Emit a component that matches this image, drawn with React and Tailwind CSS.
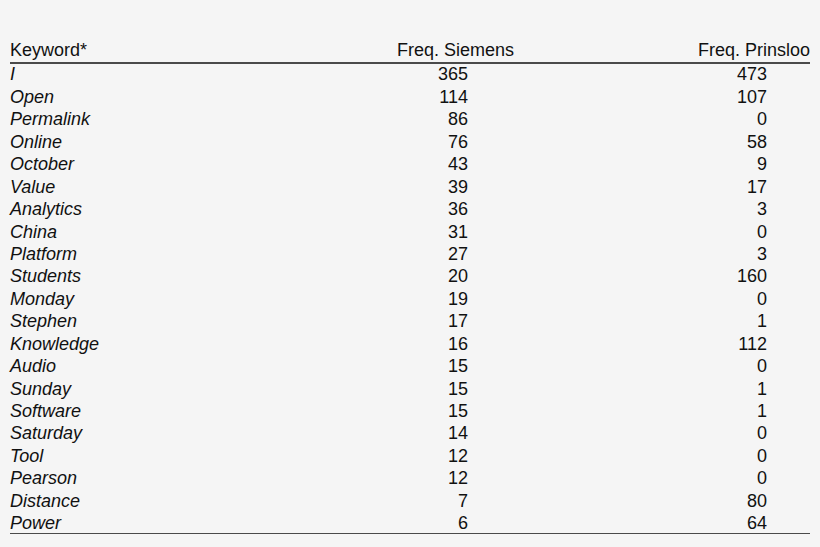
import React from "react";

const rows = [
  ["I", 365, 473],
  ["Open", 114, 107],
  ["Permalink", 86, 0],
  ["Online", 76, 58],
  ["October", 43, 9],
  ["Value", 39, 17],
  ["Analytics", 36, 3],
  ["China", 31, 0],
  ["Platform", 27, 3],
  ["Students", 20, 160],
  ["Monday", 19, 0],
  ["Stephen", 17, 1],
  ["Knowledge", 16, 112],
  ["Audio", 15, 0],
  ["Sunday", 15, 1],
  ["Software", 15, 1],
  ["Saturday", 14, 0],
  ["Tool", 12, 0],
  ["Pearson", 12, 0],
  ["Distance", 7, 80],
  ["Power", 6, 64],
];

export default function App() {
  return (
    <div
      className="w-[820px] h-[547px] bg-[#f5f5f5] text-[#111111] overflow-hidden pt-[39px] pl-[10px]"
      style={{ fontFamily: '"Liberation Sans", Arial, sans-serif' }}
    >
      <div className="w-[800px] text-[18px]">
        <div className="flex leading-[22.45px] pb-[1px] border-b-2 border-[#4a4a4a]">
          <div className="w-[330px]">Keyword*</div>
          <div className="w-[231px] text-center">Freq. Siemens</div>
          <div className="w-[239px] text-right">Freq. Prinsloo</div>
        </div>
        <div className="-mt-[1px]">
          {rows.map(([k, a, b]) => (
            <div key={k} className="flex h-[22.45px] leading-[22.45px]">
              <div className="w-[330px] italic">{k}</div>
              <div className="w-[231px] text-right pr-[103px]">{a}</div>
              <div className="w-[239px] text-right pr-[43px]">{b}</div>
            </div>
          ))}
        </div>
        <div className="-mt-[2px] border-t border-[#4a4a4a]" />
      </div>
    </div>
  );
}
